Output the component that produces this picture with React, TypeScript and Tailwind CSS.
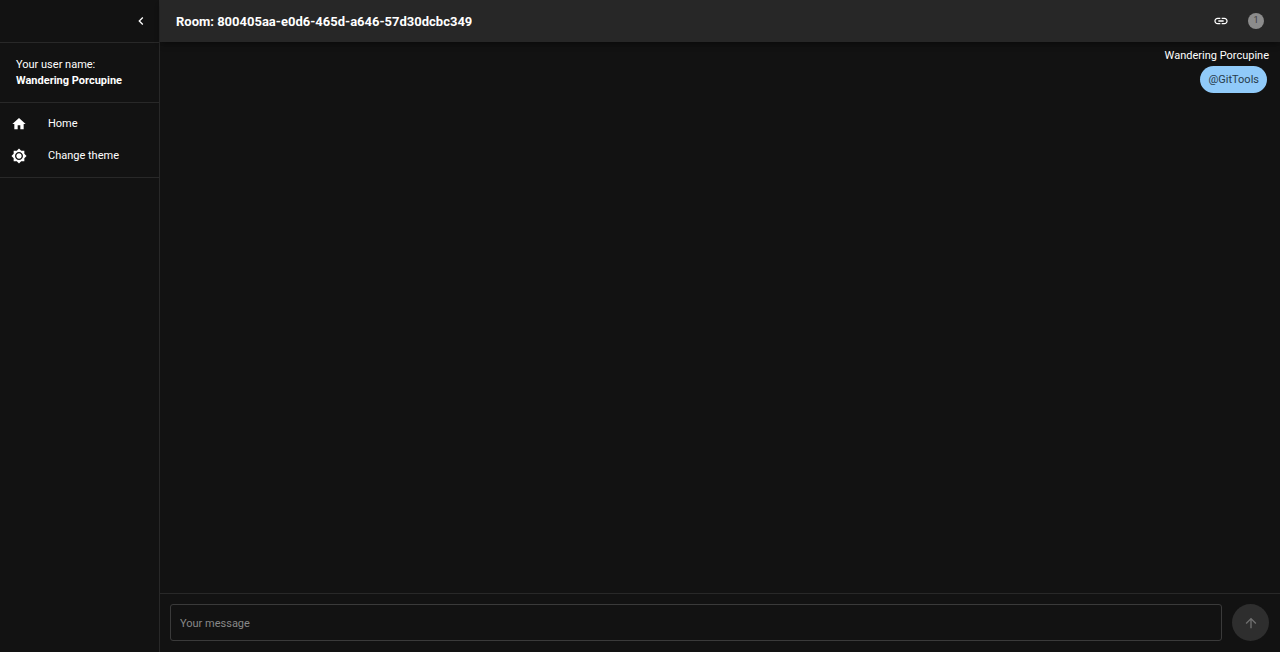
import { useState } from 'react';

const paths = {
  chevron: 'M15.41 7.41L14 6l-6 6 6 6 1.41-1.41L10.83 12z',
  home: 'M10 20v-6h4v6h5v-8h3L12 3 2 12h3v8z',
  theme:
    'M20 8.69V4h-4.69L12 .69 8.69 4H4v4.69L.69 12 4 15.31V20h4.69L12 23.31 15.31 20H20v-4.69L23.31 12 20 8.69zM12 18c-3.31 0-6-2.69-6-6s2.69-6 6-6 6 2.69 6 6-2.69 6-6 6zm0-10c-2.21 0-4 1.79-4 4s1.79 4 4 4 4-1.79 4-4-1.79-4-4-4z',
  link: 'M3.9 12c0-1.71 1.39-3.1 3.1-3.1h4V7H7c-2.76 0-5 2.24-5 5s2.24 5 5 5h4v-1.9H7c-1.71 0-3.1-1.39-3.1-3.1zM8 13h8v-2H8v2zm9-6h-4v1.9h4c1.71 0 3.1 1.39 3.1 3.1s-1.39 3.1-3.1 3.1h-4V17h4c2.76 0 5-2.24 5-5s-2.24-5-5-5z',
  send: 'M4 12l1.41 1.41L11 7.83V20h2V7.83l5.58 5.59L20 12l-8-8-8 8z',
};

function Icon({ name }: { name: keyof typeof paths }) {
  return (
    <svg className="size-4 shrink-0 fill-current" viewBox="0 0 24 24" aria-hidden="true">
      <path d={paths[name]} />
    </svg>
  );
}

function Sidebar() {
  return (
    <aside className="flex w-40 shrink-0 flex-col border-r border-[#282828]">
      <div className="flex h-[43px] items-center justify-end border-b border-[#282828] pr-[10px]">
        <button type="button" aria-label="Collapse menu" className="flex">
          <Icon name="chevron" />
        </button>
      </div>
      <div className="h-[60px] border-b border-[#282828] px-4 pt-[14px] leading-4">
        <p>Your user name:</p>
        <p className="font-bold">Wandering Porcupine</p>
      </div>
      <nav className="flex flex-col border-b border-[#282828] py-[5px]">
        <a href="#home" className="flex h-8 items-center gap-[21px] px-[11px]">
          <Icon name="home" />
          Home
        </a>
        <button type="button" className="flex h-8 items-center gap-[21px] px-[11px] text-left">
          <Icon name="theme" />
          Change theme
        </button>
      </nav>
    </aside>
  );
}

export default function App() {
  const [message, setMessage] = useState('');
  return (
    <div className="flex h-screen bg-[#121212] font-['Roboto',sans-serif] text-[11px] text-white">
      <Sidebar />
      <div className="flex min-w-0 flex-1 flex-col">
        <header className="flex h-[42px] shrink-0 items-center justify-between bg-[#272727] px-4 shadow-md shadow-black/25">
          <h1 className="truncate pt-px text-[13px] font-bold">Room: 800405aa-e0d6-465d-a646-57d30dcbc349</h1>
          <div className="flex items-center gap-[19px]">
            <button type="button" aria-label="Copy room link" className="flex">
              <Icon name="link" />
            </button>
            <span className="flex size-4 items-center justify-center rounded-full bg-[#8c8c8c] text-[9px] text-[#3c3c3c]">
              1
            </span>
          </div>
        </header>
        <main className="flex flex-1 flex-col items-end overflow-y-auto px-[11px] pt-[6px]">
          <p className="leading-4">Wandering Porcupine</p>
          <p className="mt-[2px] mr-[2px] flex h-[27px] items-center rounded-full bg-[#90caf9] px-2 pt-px text-[#273b4b]">
            @GitTools
          </p>
        </main>
        <form
          className="flex shrink-0 items-center gap-[10px] border-t border-[#282828] pt-[10px] pr-[11px] pb-[11px] pl-[10px]"
          onSubmit={(event) => event.preventDefault()}
        >
          <input
            type="text"
            aria-label="Your message"
            placeholder="Your message"
            value={message}
            onChange={(event) => setMessage(event.target.value)}
            className="h-[37px] min-w-0 flex-1 rounded-[3px] border border-[#3a3a3a] bg-transparent px-[9px] pt-px outline-none placeholder:text-[#888888] focus:border-[#90caf9]"
          />
          <button
            type="submit"
            aria-label="Send message"
            disabled={!message}
            className="flex size-[37px] items-center justify-center rounded-full bg-[#90caf9] text-[#121212] disabled:bg-[#2e2e2e] disabled:text-[#707070]"
          >
            <Icon name="send" />
          </button>
        </form>
      </div>
    </div>
  );
}
